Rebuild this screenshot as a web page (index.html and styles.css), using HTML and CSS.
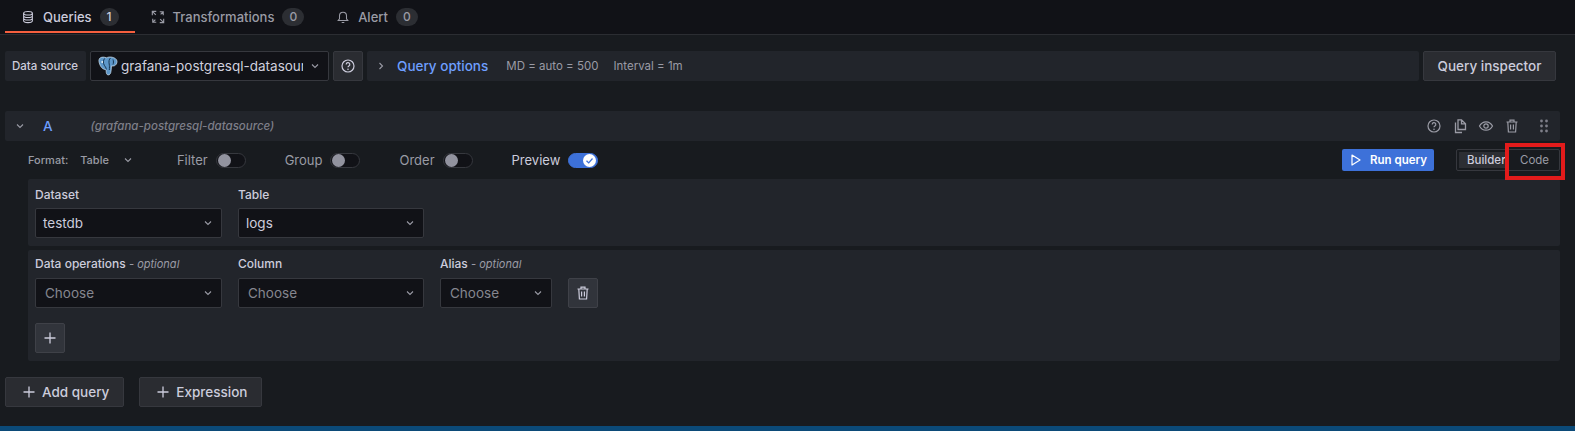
FILE: index.html
```html
<!DOCTYPE html>
<html>
<head>
<title>Queries</title>
<meta charset="UTF-8">
<link rel="stylesheet" href="styles.css">
</head>
<body>
	<svg class="defs" width="0" height="0">
		<symbol id="chev" viewBox="0 0 12 12"><path d="M3 4.5 6 7.5 9 4.5" fill="none" stroke="currentColor" stroke-width="1.1"/></symbol>
		<symbol id="plus" viewBox="0 0 16 16"><path d="M8 2.5v11M2.5 8h11" fill="none" stroke="currentColor" stroke-width="1.3"/></symbol>
		<symbol id="help" viewBox="0 0 16 16"><g fill="none" stroke="currentColor" stroke-width="1.2"><circle cx="8" cy="8" r="6"/><path d="M6.2 6.5a1.8 1.8 0 1 1 2.7 1.5c-.6.4-.9.7-.9 1.3"/></g><circle cx="8" cy="11.2" r=".8" fill="currentColor"/></symbol>
		<symbol id="trash" viewBox="0 0 16 16"><path d="M2.5 4h11M6 4V2.2h4V4M3.8 4l.6 10h7.2l.6-10M6.6 6.5v5M9.4 6.5v5" fill="none" stroke="currentColor" stroke-width="1.2"/></symbol>
	</svg>

	<div class="tabs">
		<div class="tab tab-active">
			<svg class="tab-icon" viewBox="0 0 16 16"><g fill="none" stroke="currentColor" stroke-width="1.2"><ellipse cx="8" cy="3.6" rx="5" ry="2"/><path d="M3 3.6v8.8c0 1.1 2.2 2 5 2s5-.9 5-2V3.6M3 6.6c0 1.1 2.2 2 5 2s5-.9 5-2M3 9.5c0 1.1 2.2 2 5 2s5-.9 5-2"/></g></svg>
			<span>Queries</span><span class="count">1</span>
		</div>
		<div class="tab">
			<svg class="tab-icon" viewBox="0 0 16 16"><path d="M1.500 6V1.500H6M1.500 1.500l4 4M10 2h4v4M14 2l-3 3M14.500 10v4.500H10M14.500 14.500l-4-4M6 14H2v-4M2 14l3-3" fill="none" stroke="currentColor" stroke-width="1.300"/></svg>
			<span>Transformations</span><span class="count">0</span>
		</div>
		<div class="tab">
			<svg class="tab-icon" viewBox="0 0 16 16"><path d="M2.500 12h11l-1.500-2V6.500a4 4 0 0 0-8 0V10zM6.500 14.300h3" fill="none" stroke="currentColor" stroke-width="1.2"/></svg>
			<span>Alert</span><span class="count">0</span>
		</div>
	</div>

	<div class="content">
		<div class="toolbar">
			<div class="ds-label">Data source</div>
			<div class="input ds-select">
				<svg class="pg-logo" viewBox="0 0 20 20">
					<path d="M1.500 2.500C3.500.5 6.500 1 8.500 1.800c1.500-.8 3.500-1 5.500-.6 2.500.5 5 1.800 5 4.300 0 2-1 3.600-2.500 4.200-1.200.5-2.300.4-3 .2-.2 2-.2 4.500-.7 6.500-.5 2.300-2.500 3.200-3.700 2.100-1-.9-.9-3-1-4.800C6 13.500 3.800 12.500 2.500 10 1.200 7.500.2 4.200 1.500 2.500z" fill="#5d97c9" stroke="#cfdfee" stroke-width=".7"/>
					<path d="M6.500 2.500c-1.300 2-1.500 4.500-.2 6.800.8 1.300 1.800 2 2 4.200M12.500 2c-1.500 1.200-1.800 3.500-1.300 6 .3 1.500.3 4 .1 6M15 3.500c.6 1.600.6 3.400 0 5" fill="none" stroke="#17344f" stroke-width="1"/>
					<circle cx="4.200" cy="6" r=".9" fill="#e8f0f7"/>
				</svg>
				<span class="ds-name">grafana-postgresql-datasource</span>
				<svg class="chev"><use href="#chev"/></svg>
			</div>
			<div class="btn btn-square ds-help"><svg class="icon"><use href="#help"/></svg></div>
			<div class="options">
				<svg class="chev opt-chev"><use href="#chev"/></svg>
				<span class="opt-title">Query options</span>
				<span class="opt-info">MD = auto = 500</span>
				<span class="opt-info">Interval = 1m</span>
			</div>
			<div class="btn inspector">Query inspector</div>
		</div>

		<div class="query">
			<div class="query-head">
				<svg class="chev head-chev"><use href="#chev"/></svg>
				<span class="ref">A</span>
				<span class="head-ds">(grafana-postgresql-datasource)</span>
				<div class="head-actions">
					<svg class="icon"><use href="#help"/></svg>
					<svg class="icon" viewBox="0 0 16 16"><path d="M6 1.800h3.500L13.500 5.800v5.700H6zM9.500 1.800v4h4M3.500 4.500v10h6.500" fill="none" stroke="currentColor" stroke-width="1.300"/></svg>
					<svg class="icon" viewBox="0 0 16 16"><g fill="none" stroke="currentColor" stroke-width="1.200"><path d="M1.500 8C3 5.200 5.300 3.800 8 3.800s5 1.400 6.500 4.200C13 10.800 10.700 12.200 8 12.200S3 10.800 1.500 8z"/><circle cx="8" cy="8" r="2.200"/></g></svg>
					<svg class="icon"><use href="#trash"/></svg>
					<svg class="icon grip" viewBox="0 0 16 16" fill="currentColor"><circle cx="5.500" cy="3" r="1.400"/><circle cx="10.500" cy="3" r="1.400"/><circle cx="5.500" cy="8" r="1.400"/><circle cx="10.500" cy="8" r="1.400"/><circle cx="5.500" cy="13" r="1.400"/><circle cx="10.500" cy="13" r="1.400"/></svg>
				</div>
			</div>

			<div class="query-opts">
				<span class="fmt-label">Format:</span>
				<span class="fmt-value">Table</span>
				<svg class="chev fmt-chev"><use href="#chev"/></svg>
				<label class="toggle toggle-filter">Filter<span class="switch"></span></label>
				<label class="toggle">Group<span class="switch"></span></label>
				<label class="toggle">Order<span class="switch"></span></label>
				<label class="toggle toggle-preview">Preview
					<span class="switch switch-on">
						<svg class="switch-check" viewBox="0 0 13 13"><path d="M3.500 6.700 5.700 8.900 9.500 4.500" fill="none" stroke="#3d71d9" stroke-width="1.300"/></svg>
					</span>
				</label>
				<div class="run">
					<svg class="run-icon" viewBox="0 0 10 12"><path d="M1 1 9 6 1 11z" fill="none" stroke="currentColor" stroke-width="1.200" stroke-linejoin="round"/></svg>
					Run query
				</div>
				<div class="mode">
					<span class="mode-item mode-active">Builder</span>
					<span class="mode-item">Code</span>
				</div>
			</div>

			<div class="card card-top">
				<div class="field field-wide">
					<div class="field-label">Dataset</div>
					<div class="input"><span class="value">testdb</span><svg class="chev"><use href="#chev"/></svg></div>
				</div>
				<div class="field field-wide">
					<div class="field-label">Table</div>
					<div class="input"><span class="value">logs</span><svg class="chev"><use href="#chev"/></svg></div>
				</div>
			</div>

			<div class="card card-bottom">
				<div class="card-row">
					<div class="field field-wide">
						<div class="field-label">Data operations <i>- optional</i></div>
						<div class="input"><span class="placeholder">Choose</span><svg class="chev"><use href="#chev"/></svg></div>
					</div>
					<div class="field field-wide">
						<div class="field-label">Column</div>
						<div class="input"><span class="placeholder">Choose</span><svg class="chev"><use href="#chev"/></svg></div>
					</div>
					<div class="field field-alias">
						<div class="field-label">Alias <i>- optional</i></div>
						<div class="input"><span class="placeholder">Choose</span><svg class="chev"><use href="#chev"/></svg></div>
					</div>
					<div class="btn btn-square btn-light"><svg class="icon"><use href="#trash"/></svg></div>
				</div>
				<div class="btn btn-square btn-light add-op"><svg class="icon"><use href="#plus"/></svg></div>
			</div>
		</div>

		<div class="bottom-btns">
			<div class="btn btn-add"><svg class="icon"><use href="#plus"/></svg>Add query</div>
			<div class="btn btn-add"><svg class="icon"><use href="#plus"/></svg>Expression</div>
		</div>
	</div>

	<div class="statusbar"></div>
	<div class="highlight"></div>
</body>
</html>
```

FILE: styles.css
```css
html, body {
	margin: 0;
	height: 431px;
	overflow: hidden;
}

body {
	position: relative;
	background-color: #181b1f;
	color: #ccccdc;
	font-family: Inter, "Liberation Sans", sans-serif;
	font-size: 13.5px;
	line-height: 20px;
	display: flex;
	flex-direction: column;
}

.defs {
	position: absolute;
}

.tabs {
	display: flex;
	height: 34px;
	flex-shrink: 0;
	padding-left: 5px;
	background-color: #111217;
	border-bottom: 1px solid #2b2d32;
}

.tab {
	display: flex;
	align-items: center;
	height: 33px;
	padding: 0 16px;
	color: #9a9ba5;
	font-weight: 500;
	font-size: 13px;
}

.tab-active {
	color: #ccccdc;
	border-bottom: 2px solid #f55f3e;
	height: 33px;
	box-sizing: border-box;
	padding-top: 2px;
}

.tab-icon {
	width: 14px;
	height: 14px;
	margin-right: 8px;
}

.count {
	margin-left: 8px;
	padding: 0 7px;
	height: 18px;
	line-height: 18px;
	border-radius: 9px;
	background-color: #2c2e33;
	font-size: 12px;
	text-align: center;
}

.content {
	flex: 1;
	padding: 16px 19px 0 5px;
}

.toolbar {
	display: flex;
	height: 30px;
	gap: 4px;
}

.ds-label {
	display: flex;
	align-items: center;
	padding: 0 7px;
	width: 67px;
	background-color: #22252b;
	border-radius: 2px;
	font-size: 11.5px;
	font-weight: 500;
	white-space: nowrap;
}

.input {
	display: flex;
	align-items: center;
	box-sizing: border-box;
	height: 30px;
	padding: 0 8px;
	background-color: #111217;
	border: 1px solid #36383e;
	border-radius: 2px;
}

.ds-select {
	width: 239px;
	padding: 0 7px;
}

.pg-logo {
	width: 20px;
	height: 20px;
	margin-right: 3px;
	flex-shrink: 0;
}

.ds-name {
	flex: 1;
	overflow: hidden;
	white-space: nowrap;
	color: #d0d0de;
}

.chev {
	width: 12px;
	height: 12px;
	margin-left: 6px;
	color: #9a9ba5;
	flex-shrink: 0;
}

.icon {
	width: 16px;
	height: 16px;
	flex-shrink: 0;
}

.btn {
	display: flex;
	align-items: center;
	justify-content: center;
	box-sizing: border-box;
	height: 30px;
	background-color: #2a2c31;
	border: 1px solid #36383e;
	border-radius: 2px;
	font-weight: 500;
	color: #ccccdc;
}

.btn-square {
	width: 30px;
}

.btn-light {
	background-color: #31343b;
	border-color: #3f4148;
}

.options {
	flex: 1;
	display: flex;
	align-items: center;
	background-color: #22252b;
	border-radius: 2px;
	font-size: 11.5px;
	color: #9a9ba5;
}

.opt-chev {
	margin-left: 8px;
	transform: rotate(-90deg);
}

.opt-title {
	color: #6e9fff;
	font-size: 13.5px;
	font-weight: 500;
	margin: 0 18px 0 10px;
}

.opt-info {
	margin-right: 15px;
}

.inspector {
	width: 133px;
}

.query {
	margin-top: 30px;
	width: 1555px;
}

.query-head {
	display: flex;
	align-items: center;
	height: 30px;
	background-color: #22252b;
	border-radius: 2px;
}

.head-chev {
	margin-left: 9px;
}

.ref {
	margin-left: 17px;
	color: #6e9fff;
	font-weight: 500;
}

.head-ds {
	margin-left: 38px;
	font-size: 11.5px;
	font-style: italic;
	font-weight: 500;
	color: #7e7f89;
}

.head-actions {
	display: flex;
	align-items: center;
	margin-left: auto;
	gap: 10px;
	padding-right: 8px;
	color: #9a9ba5;
}

.grip {
	margin-left: 6px;
	color: #7e7f89;
}

.query-opts {
	display: flex;
	align-items: center;
	height: 38px;
	padding-left: 23px;
	font-size: 13px;
	color: #9a9ba5;
}

.fmt-label, .fmt-value {
	font-size: 11px;
	font-weight: 500;
}

.fmt-value {
	margin-left: 12px;
}

.fmt-chev {
	margin-left: 13px;
}

.toggle {
	display: flex;
	align-items: center;
	gap: 8px;
	margin-left: 39px;
}

.toggle-filter {
	margin-left: 43px;
}

.toggle-preview {
	color: #ccccdc;
}

.switch {
	position: relative;
	display: block;
	box-sizing: border-box;
	width: 30px;
	height: 15px;
	background-color: #111217;
	border: 1px solid #36383e;
	border-radius: 8px;
}

.switch::before {
	content: "";
	position: absolute;
	left: 1px;
	top: 0;
	width: 13px;
	height: 13px;
	border-radius: 50%;
	background-color: #92939f;
}

.switch-on {
	background-color: #3d71d9;
	border-color: #3d71d9;
}

.switch-on::before {
	left: auto;
	right: 1px;
	background-color: #fff;
}

.switch-check {
	position: absolute;
	right: 1px;
	top: 0;
	width: 13px;
	height: 13px;
}

.run {
	display: flex;
	align-items: center;
	margin-left: auto;
	box-sizing: border-box;
	height: 22px;
	width: 92px;
	padding-left: 9px;
	background-color: #3d71d9;
	border-radius: 2px;
	color: #fff;
	font-size: 11.5px;
	font-weight: 600;
}

.run-icon {
	width: 10px;
	height: 12px;
	margin-right: 9px;
}

.mode {
	display: flex;
	align-items: center;
	box-sizing: border-box;
	margin-left: 22px;
	padding: 2px;
	height: 22px;
	width: 104px;
	border: 1px solid #36383e;
	border-radius: 2px;
	font-size: 11.5px;
}

.mode-item {
	padding: 0 0 0 8px;
	line-height: 16px;
	color: #9a9ba5;
}

.mode-active {
	width: 46px;
	box-sizing: border-box;
	margin-right: 7px;
	background-color: #2c2e33;
	color: #ccccdc;
	font-weight: 500;
	white-space: nowrap;
}

.card {
	margin-left: 23px;
	padding: 6px 7px;
	background-color: #22252b;
	border-radius: 2px;
}

.card-top {
	display: flex;
	gap: 16px;
	height: 67px;
	box-sizing: border-box;
	margin-bottom: 4px;
}

.card-top .field-label {
	line-height: 19px;
}

.card-bottom {
	height: 111px;
	box-sizing: border-box;
	padding-top: 5px;
}

.card-row {
	display: flex;
	gap: 16px;
	align-items: flex-end;
}

.field-label {
	height: 23px;
	font-size: 12px;
	font-weight: 500;
	color: #ccccdc;
	line-height: 17px;
	white-space: nowrap;
}

.field-label i {
	font-size: 11px;
	font-weight: 400;
	color: #9a9ba5;
}

.field-wide {
	width: 187px;
}

.field-wide + .field-wide {
	width: 186px;
}

.field-alias {
	width: 112px;
}

.field .input {
	padding: 0 7px;
}

.value {
	flex: 1;
	color: #ccccdc;
}

.placeholder {
	flex: 1;
	padding-left: 2px;
	color: #85868f;
}

.add-op {
	margin-top: 15px;
}

.bottom-btns {
	display: flex;
	gap: 15px;
	margin-top: 16px;
}

.btn-add {
	padding: 0 14px 0 15px;
	gap: 5px;
}

.statusbar {
	height: 5px;
	flex-shrink: 0;
	background-color: #0b4a78;
}

/* red annotation drawn over the screenshot */
.highlight {
	position: absolute;
	left: 1505px;
	top: 143px;
	width: 52px;
	height: 29px;
	border: 4px solid #e31b1b;
}
```
